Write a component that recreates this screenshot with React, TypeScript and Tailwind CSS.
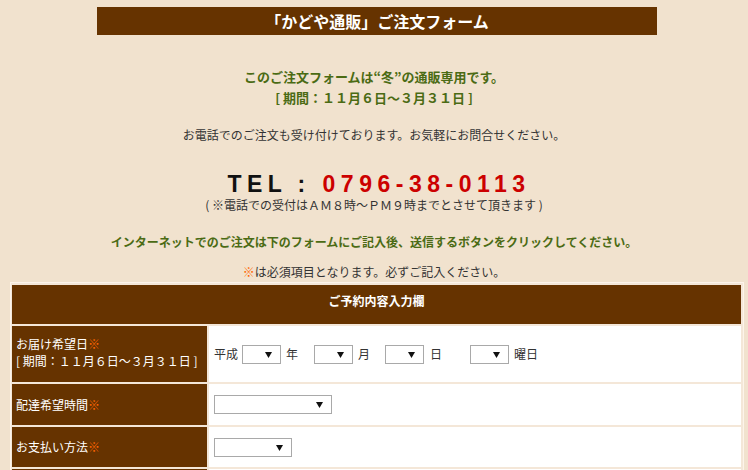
import React from "react";

const Sel = ({ w }: { w: number }) => (
  <div
    className="relative h-[19px] border border-[#a9a9a9] bg-white"
    style={{ width: w }}
  >
    <svg
      className="absolute right-[8px] top-[6px]"
      width="7"
      height="6"
      viewBox="0 0 7 6"
    >
      <path d="M0 0 H7 L3.5 6 Z" fill="#111" />
    </svg>
  </div>
);

const Mark = () => <span className="text-[#ff6600]">※</span>;

export default function App() {
  return (
    <div
      className="w-[748px] h-[470px] overflow-hidden bg-[#f1e2ce] text-[#333]"
      style={{ fontFamily: '"Noto Sans CJK JP", "Noto Sans", sans-serif' }}
    >
      <div className="pt-[7px] pl-[97px]">
        <div className="w-[560px] h-[28px] bg-[#663300] flex items-center justify-center text-white font-bold text-[16px] leading-none">
          「かどや通販」ご注文フォーム
        </div>
      </div>

      <div className="mt-[31px] text-center text-[13px] font-bold leading-[21px] text-[#4b6b14]">
        <div>このご注文フォームは“冬”の通販専用です。</div>
        <div>[ 期間：１１月６日～３月３１日 ]</div>
      </div>

      <div className="mt-[19px] text-center text-[12px] leading-[16px]">
        お電話でのご注文も受け付けております。お気軽にお問合せください。
      </div>

      <div className="mt-[28px] text-center text-[23px] font-bold leading-[26px] tracking-[5.5px] pl-[10px] font-['Liberation_Sans',Arial,sans-serif]">
        <span className="text-[#111]">TEL</span>
        <span className="text-[#111] ml-[10px] mr-[12px]">:</span>
        <span className="text-[#cc0000]">0796-38-0113</span>
      </div>
      <div className="text-center text-[12px] leading-[16px]">
        ( ※電話での受付はＡＭ８時～ＰＭ９時までとさせて頂きます )
      </div>

      <div className="mt-[21px] text-center text-[12px] font-bold leading-[16px] text-[#4b6b14]">
        インターネットでのご注文は下のフォームにご記入後、送信するボタンをクリックしてください。
      </div>
      <div className="mt-[14px] text-center text-[12px] leading-[16px]">
        <Mark />は必須項目となります。必ずご記入ください。
      </div>

      <div className="mt-[2px] pl-[10px]">
        <div className="w-[734px] border border-[#fdf4ea] bg-[#f4e7d8] pl-px pr-[2px] pt-[2px] flex flex-col gap-[2px] text-[12px]">
          <div className="h-[39px] bg-[#663300] flex items-center justify-center text-white font-bold pb-[8px]">
            ご予約内容入力欄
          </div>

          <div className="h-[56px] flex gap-[2px]">
            <div className="w-[195px] bg-[#663300] text-white pl-[4px] flex flex-col justify-center leading-[17px] pb-[4px]">
              <div>
                お届け希望日
                <Mark />
              </div>
              <div>[ 期間：１１月６日～３月３１日 ]</div>
            </div>
            <div className="flex-1 bg-white flex items-center pl-[5px] leading-none">
              <span>平成</span>
              <div className="ml-[4px]">
                <Sel w={39} />
              </div>
              <span className="ml-[5px]">年</span>
              <div className="ml-[16px]">
                <Sel w={39} />
              </div>
              <span className="ml-[5px]">月</span>
              <div className="ml-[15px]">
                <Sel w={39} />
              </div>
              <span className="ml-[6px]">日</span>
              <div className="ml-[28px]">
                <Sel w={39} />
              </div>
              <span className="ml-[5px]">曜日</span>
            </div>
          </div>

          <div className="h-[41px] flex gap-[2px]">
            <div className="w-[195px] bg-[#663300] text-white pl-[4px] flex items-center">
              配達希望時間
              <Mark />
            </div>
            <div className="flex-1 bg-white flex items-center pl-[5px]">
              <Sel w={118} />
            </div>
          </div>

          <div className="h-[40px] flex gap-[2px]">
            <div className="w-[195px] bg-[#663300] text-white pl-[4px] flex items-center">
              お支払い方法
              <Mark />
            </div>
            <div className="flex-1 bg-white flex items-center pl-[5px]">
              <Sel w={78} />
            </div>
          </div>

          <div className="h-[40px] flex gap-[2px]">
            <div className="w-[195px] bg-[#663300]" />
            <div className="flex-1 bg-white" />
          </div>
        </div>
      </div>
    </div>
  );
}
